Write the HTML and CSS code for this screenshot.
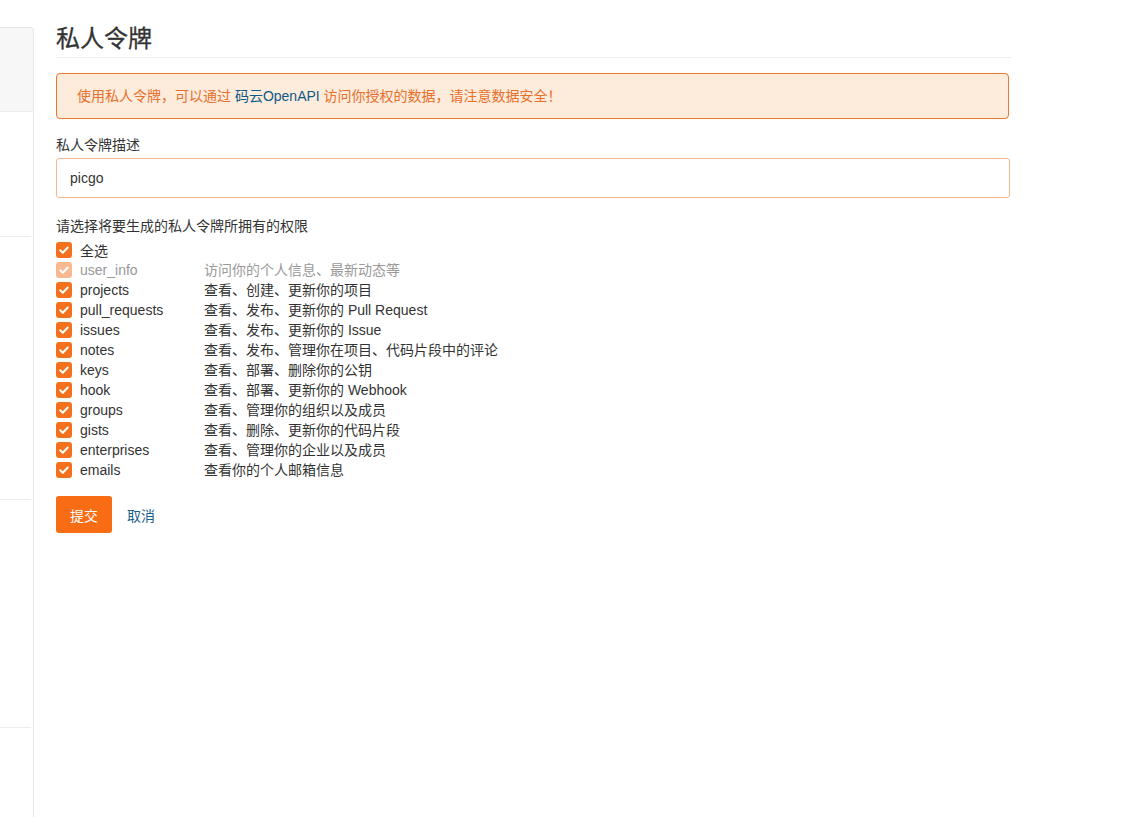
FILE: index.html
```html
<!DOCTYPE html>
<html lang="zh-CN">
<head>
<meta charset="utf-8">
<title>私人令牌</title>
<link rel="stylesheet" href="styles.css">
</head>
<body>
<div class="page">
  <aside class="sidebar">
    <div class="side-head"></div>
    <div class="side-sec s1"></div>
    <div class="side-sec s2"></div>
    <div class="side-sec s3"></div>
    <div class="side-sec s4"></div>
  </aside>
  <main class="main">
    <h2 class="title">私人令牌</h2>
    <div class="alert">使用私人令牌，可以通过 <a class="alert-link" href="#">码云OpenAPI</a> 访问你授权的数据，请注意数据安全！</div>
    <div class="field-label">私人令牌描述</div>
    <div class="input">picgo</div>
    <div class="field-label perm-label">请选择将要生成的私人令牌所拥有的权限</div>
    <div class="perms">
      <div class="row"><span class="box"><svg viewBox="0 0 16 16"><path d="M4.2 8.2l2.6 2.5 5-5.2" /></svg></span><span class="name">全选</span></div>
      <div class="row disabled"><span class="box"><svg viewBox="0 0 16 16"><path d="M4.2 8.2l2.6 2.5 5-5.2" /></svg></span><span class="name">user_info</span><span class="desc">访问你的个人信息、最新动态等</span></div>
      <div class="row"><span class="box"><svg viewBox="0 0 16 16"><path d="M4.2 8.2l2.6 2.5 5-5.2" /></svg></span><span class="name">projects</span><span class="desc">查看、创建、更新你的项目</span></div>
      <div class="row"><span class="box"><svg viewBox="0 0 16 16"><path d="M4.2 8.2l2.6 2.5 5-5.2" /></svg></span><span class="name">pull_requests</span><span class="desc">查看、发布、更新你的 Pull Request</span></div>
      <div class="row"><span class="box"><svg viewBox="0 0 16 16"><path d="M4.2 8.2l2.6 2.5 5-5.2" /></svg></span><span class="name">issues</span><span class="desc">查看、发布、更新你的 Issue</span></div>
      <div class="row"><span class="box"><svg viewBox="0 0 16 16"><path d="M4.2 8.2l2.6 2.5 5-5.2" /></svg></span><span class="name">notes</span><span class="desc">查看、发布、管理你在项目、代码片段中的评论</span></div>
      <div class="row"><span class="box"><svg viewBox="0 0 16 16"><path d="M4.2 8.2l2.6 2.5 5-5.2" /></svg></span><span class="name">keys</span><span class="desc">查看、部署、删除你的公钥</span></div>
      <div class="row"><span class="box"><svg viewBox="0 0 16 16"><path d="M4.2 8.2l2.6 2.5 5-5.2" /></svg></span><span class="name">hook</span><span class="desc">查看、部署、更新你的 Webhook</span></div>
      <div class="row"><span class="box"><svg viewBox="0 0 16 16"><path d="M4.2 8.2l2.6 2.5 5-5.2" /></svg></span><span class="name">groups</span><span class="desc">查看、管理你的组织以及成员</span></div>
      <div class="row"><span class="box"><svg viewBox="0 0 16 16"><path d="M4.2 8.2l2.6 2.5 5-5.2" /></svg></span><span class="name">gists</span><span class="desc">查看、删除、更新你的代码片段</span></div>
      <div class="row"><span class="box"><svg viewBox="0 0 16 16"><path d="M4.2 8.2l2.6 2.5 5-5.2" /></svg></span><span class="name">enterprises</span><span class="desc">查看、管理你的企业以及成员</span></div>
      <div class="row"><span class="box"><svg viewBox="0 0 16 16"><path d="M4.2 8.2l2.6 2.5 5-5.2" /></svg></span><span class="name">emails</span><span class="desc">查看你的个人邮箱信息</span></div>
    </div>
    <div class="actions">
      <button class="btn-submit">提交</button>
      <a class="cancel" href="#">取消</a>
    </div>
  </main>
</div>
</body>
</html>
```
FILE: styles.css
```css
html, body {
  margin: 0;
  padding: 0;
  background: #fff;
}
body {
  font-family: "Liberation Sans", "Noto Sans CJK SC", sans-serif;
  font-size: 14px;
  color: #333;
}
.page {
  display: flex;
  align-items: flex-start;
  min-height: 817px;
}
.sidebar {
  width: 34px;
  margin-top: 27px;
  height: 790px;
  border: 1px solid #e6e6e6;
  border-left: none;
  border-bottom: none;
  border-top-right-radius: 4px;
  box-sizing: border-box;
  display: flex;
  flex-direction: column;
}
.side-head {
  height: 83px;
  background: #f7f7f7;
  border-top-right-radius: 4px;
  border-bottom: 1px solid #ececec;
}
.side-sec {
  margin-right: 2px;
}
.s1 { height: 124px; border-bottom: 1px solid #ededed; }
.s2 { height: 262px; border-bottom: 1px solid #ededed; }
.s3 { height: 227px; border-bottom: 1px solid #ededed; }
.s4 { flex: 1; }
.main {
  margin-left: 22px;
  width: 955px;
}
.title {
  margin: 0;
  padding-top: 22px;
  padding-bottom: 1px;
  font-size: 24px;
  line-height: 34px;
  font-weight: 400;
  -webkit-text-stroke: 0.3px #333;
  color: #333;
  border-bottom: 1px solid #eeeeee;
}
.alert {
  margin-top: 15px;
  margin-right: 2px;
  background: #fdebdc;
  border: 1px solid #e8792f;
  border-radius: 4px;
  padding: 12px 20px;
  line-height: 20px;
  color: #e8702a;
}
.alert-link {
  color: #0e5a86;
  text-decoration: none;
}
.field-label {
  margin-top: 16px;
  line-height: 20px;
  color: #333;
}
.input {
  margin-top: 3px;
  margin-right: 1px;
  height: 40px;
  box-sizing: border-box;
  border: 1px solid #f2b78f;
  border-radius: 3px;
  padding: 0 13px;
  line-height: 39px;
  color: #333;
}
.perm-label {
  margin-top: 18px;
}
.perms {
  margin-top: 4px;
  display: flex;
  flex-direction: column;
}
.row {
  display: flex;
  align-items: center;
  height: 20px;
}
.box {
  width: 16px;
  height: 16px;
  border-radius: 3px;
  background: #f4701d;
  display: flex;
  align-items: center;
  justify-content: center;
  margin-right: 8px;
  flex: none;
}
.box svg {
  width: 16px;
  height: 16px;
  fill: none;
  stroke: #fff;
  stroke-width: 2;
  stroke-linecap: round;
  stroke-linejoin: round;
}
.name {
  width: 124px;
  flex: none;
}
.desc {
  color: #333;
  align-self: flex-start;
  line-height: 20px;
}
.disabled .box {
  background: #f7b892;
}
.disabled .name,
.disabled .desc {
  color: #999;
}
.actions {
  margin-top: 16px;
  display: flex;
  align-items: center;
}
.btn-submit {
  width: 56px;
  height: 37px;
  border: none;
  border-radius: 3px;
  background: #f86c14;
  color: #fff;
  font-family: "Liberation Sans", "Noto Sans CJK SC", sans-serif;
  font-size: 14px;
  padding: 0;
  cursor: pointer;
}
.cancel {
  margin-left: 15px;
  color: #1a5f8a;
  text-decoration: none;
}
```
